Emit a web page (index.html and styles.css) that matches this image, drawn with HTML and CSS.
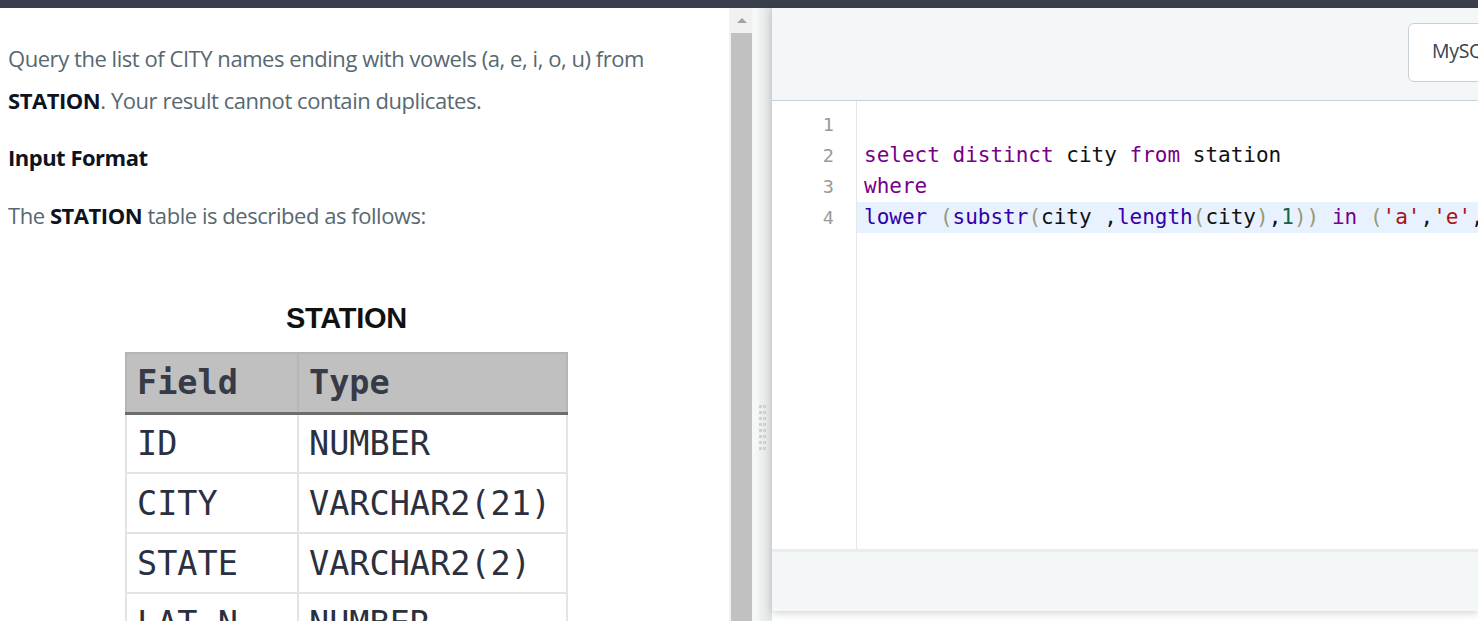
FILE: index.html
```html
<!DOCTYPE html>
<html>
<head>
<meta charset="utf-8">
<link rel="stylesheet" href="styles.css">
</head>
<body>
<div class="topbar"></div>
<div class="main">
  <div class="left">
    <div class="problem">
      <p class="para">Query the list of CITY names ending with vowels (a, e, i, o, u) from <strong>STATION</strong>. Your result cannot contain duplicates.</p>
      <p class="heading">Input Format</p>
      <p class="para">The <strong>STATION</strong> table is described as follows:</p>
      <div class="figure">
        <div class="fig-title">STATION</div>
        <table class="schema">
          <thead><tr><th class="c1">Field</th><th>Type</th></tr></thead>
          <tbody>
            <tr><td class="c1">ID</td><td>NUMBER</td></tr>
            <tr><td class="c1">CITY</td><td>VARCHAR2(21)</td></tr>
            <tr><td class="c1">STATE</td><td>VARCHAR2(2)</td></tr>
            <tr><td class="c1">LAT_N</td><td>NUMBER</td></tr>
          </tbody>
        </table>
      </div>
    </div>
  </div>
  <div class="scrollbar">
    <div class="sb-arrow"><span class="tri"></span></div>
    <div class="sb-thumb"></div>
  </div>
  <div class="gap">
    <div class="grip">
      <span></span><span></span><span></span><span></span><span></span><span></span><span></span><span></span>
    </div>
  </div>
  <div class="editor">
    <div class="ed-head">
      <div class="lang">MySQL</div>
    </div>
    <div class="ed-body">
      <div class="gutter">
        <div class="ln">1</div>
        <div class="ln">2</div>
        <div class="ln">3</div>
        <div class="ln">4</div>
      </div>
      <div class="code">
        <div class="line">&nbsp;</div>
        <div class="line"><span class="kw">select</span> <span class="kw">distinct</span> city <span class="kw">from</span> station</div>
        <div class="line"><span class="kw">where</span></div>
        <div class="line active"><span class="bi">lower</span> <span class="br">(</span><span class="bi">substr</span><span class="br">(</span>city ,<span class="bi">length</span><span class="br">(</span>city<span class="br">)</span>,<span class="num">1</span><span class="br">))</span> <span class="kw">in</span> <span class="br">(</span><span class="str">'a'</span>,<span class="str">'e'</span>,<span class="str">'i'</span>,<span class="str">'o'</span>,<span class="str">'u'</span><span class="br">)</span>;</div>
      </div>
    </div>
    <div class="ed-foot"></div>
  </div>
</div>
</body>
</html>
```
FILE: styles.css
```css
* { box-sizing: border-box; }
html, body { margin: 0; padding: 0; }
body {
  width: 1478px;
  height: 621px;
  overflow: hidden;
  background: #ffffff;
  font-family: "Open Sans", "Liberation Sans", sans-serif;
}
.topbar { height: 8px; background: #3a3f4d; }
.main { display: flex; height: 613px; }
.left { width: 729px; flex: none; overflow: hidden; background: #fff; }
.problem { padding: 0 0 0 8px; }
.para {
  margin: 0;
  font-size: 22px;
  line-height: 42px;
  color: #576871;
  width: 700px;
  letter-spacing: -0.45px;
}
.problem .para:first-child { padding-top: 29px; }
.para strong { color: #0e141e; font-weight: 700; }
.heading {
  margin: 21px 0 0;
  font-size: 22px;
  line-height: 30px;
  font-weight: 700;
  color: #0e141e;
  letter-spacing: -0.5px;
}
.heading + .para { margin-top: 22px; }
.figure { margin: 64px 0 0 117px; width: 443px; }
.fig-title {
  text-align: center;
  font-family: "Liberation Sans", Arial, sans-serif;
  font-weight: 700;
  font-size: 29px;
  color: #111;
  line-height: 36px;
  margin-bottom: 16px;
  letter-spacing: -0.3px;
}
.schema {
  border-collapse: collapse;
  width: 443px;
  font-family: "DejaVu Sans Mono", monospace;
  font-size: 33.5px;
  color: #2b3040;
}
.schema th, .schema td {
  text-align: left;
  padding: 0 0 0 10px;
  height: 60px;
  border: 2px solid #e4e4e4;
}
.schema th {
  background: #c0c0c0;
  font-weight: 700;
  color: #363b47;
  border-color: #b5b5b5;
  border-bottom: 3px solid #6c6c6c;
}
.schema .c1 { width: 172px; }
.scrollbar { width: 23px; flex: none; background: #f1f1f1; }
.sb-arrow { height: 25px; display: flex; justify-content: center; align-items: center; padding-left: 2px; }
.tri { width: 0; height: 0; border-left: 5px solid transparent; border-right: 5px solid transparent; border-bottom: 5px solid #a3a3a3; }
.sb-thumb { margin-left: 2px; width: 21px; height: 600px; background: #c1c1c1; }
.gap {
  width: 20px; flex: none;
  background: linear-gradient(to right, #f6f7f7 0, #f6f7f7 5px, #eef0f1 8px, #dfe3e5 20px);
  display: flex; align-items: flex-start; justify-content: flex-start;
}
.grip { margin: 397px 0 0 7px; display: flex; flex-direction: column; gap: 3px; }
.grip span {
  display: block; width: 7px; height: 3px;
  background: linear-gradient(to right, #cfd1d3 0, #cfd1d3 3px, transparent 3px, transparent 4px, #cfd1d3 4px);
}
.editor {
  flex: 1;
  height: 603px;
  display: flex; flex-direction: column;
  box-shadow: 0 2px 8px rgba(0,0,0,0.18);
  background: #fff;
  min-width: 0;
}
.ed-head {
  height: 93px; flex: none;
  background: #f3f7f7;
  border-bottom: 1px solid #c2d3da;
  display: flex; justify-content: flex-end; align-items: flex-start;
  padding-top: 15px;
  overflow: hidden;
}
.lang {
  flex: none;
  width: 110px;
  height: 59px;
  margin-right: -40px;
  border: 1px solid #c9d0d6;
  border-radius: 6px;
  background: #fff;
  font-size: 19.5px;
  color: #39424e;
  padding: 15px 0 0 23px;
  line-height: 24px;
  letter-spacing: -0.3px;
}
.ed-body { flex: 1; display: flex; overflow: hidden; background: #fff; }
.gutter {
  width: 85px; flex: none;
  border-right: 1px solid #e3e8ea;
  padding-top: 8px;
}
.ln {
  height: 31px; line-height: 31px;
  text-align: right;
  padding-right: 22px;
  font-family: "DejaVu Sans Mono", monospace;
  font-size: 18.5px;
  color: #999;
}
.code {
  flex: 1; padding-top: 8px;
  font-family: "DejaVu Sans Mono", monospace;
  font-size: 21px;
  color: #111;
  overflow: hidden;
  min-width: 0;
}
.line { height: 31px; line-height: 31px; padding-left: 7px; white-space: pre; }
.line.active { background: #e8f2ff; }
.kw { color: #770088; }
.bi { color: #3300aa; }
.br { color: #999977; }
.num { color: #116644; }
.str { color: #aa1111; }
.ed-foot {
  height: 62px; flex: none;
  background: #f3f7f7;
  border-top: 3px solid #ececec;
}
```
